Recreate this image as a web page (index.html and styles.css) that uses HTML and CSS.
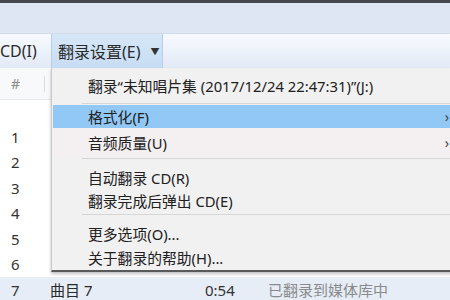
FILE: index.html
```html
<!DOCTYPE html>
<html>
<head>
<meta charset="utf-8">
<link rel="stylesheet" href="styles.css">
</head>
<body>
<div class="screen">
  <div class="topbar"></div>
  <div class="band"></div>
  <div class="toolbar">
    <div class="tb-item cut">CD(I)</div>
    <div class="tb-item active">翻录设置(E)<span class="caret">▼</span></div>
  </div>
  <div class="list">
    <div class="header"><span class="c-num">#</span><span class="hsep"></span></div>
    <div class="gap"></div>
    <div class="row"><span class="c-num">1</span><span class="mark"></span></div>
    <div class="row"><span class="c-num">2</span><span class="mark"></span></div>
    <div class="row"><span class="c-num">3</span><span class="mark"></span></div>
    <div class="row"><span class="c-num">4</span><span class="mark"></span></div>
    <div class="row"><span class="c-num">5</span><span class="mark"></span></div>
    <div class="row"><span class="c-num">6</span><span class="mark"></span></div>
    <div class="row sel"><span class="c-num">7</span><span class="c-title">曲目 7</span><span class="c-len">0:54</span><span class="c-status">已翻录到媒体库中</span></div>
  </div>
  <div class="menu">
    <div class="mi first">翻录“未知唱片集 (2017/12/24 22:47:31)”(J:)</div>
    <div class="msep s1"></div>
    <div class="mi hl">格式化(F)<span class="arrow">›</span></div>
    <div class="mi sub">音频质量(U)<span class="arrow">›</span></div>
    <div class="msep s2"></div>
    <div class="mi">自动翻录 CD(R)</div>
    <div class="mi">翻录完成后弹出 CD(E)</div>
    <div class="msep s3"></div>
    <div class="mi tall">更多选项(O)...</div>
    <div class="mi taller">关于翻录的帮助(H)...</div>
  </div>
</div>
</body>
</html>
```
FILE: styles.css
```css
html, body {
  margin: 0;
  padding: 0;
}
body {
  font-family: "Noto Sans", "Noto Sans CJK SC", sans-serif;
  color: #1f1f1f;
}
.screen {
  position: relative;
  width: 450px;
  height: 300px;
  overflow: hidden;
  background: #ffffff;
}
.topbar {
  height: 3px;
  background: #44474c;
}
.band {
  height: 30px;
  background: #dee6f4;
}
.toolbar {
  height: 35px;
  display: flex;
  align-items: stretch;
  background: linear-gradient(#f7faff 0%, #f3f7fd 20%, #e2eaf6 100%);
  border-top: 1px solid #d3dbe8;
  box-sizing: border-box;
}
.tb-item {
  display: flex;
  align-items: center;
  font-size: 16px;
  color: #2a2a2a;
}
.tb-item.cut {
  margin-left: 0;
  width: 51px;
}
.tb-item.active {
  width: 112px;
  box-sizing: border-box;
  padding-left: 6px;
  background: linear-gradient(#d6e7f8, #c7ddf4);
  border-left: 1px solid #b5cfea;
  border-right: 1px solid #b5cfea;
}
.caret {
  font-size: 9px;
  margin-left: 10px;
  color: #333;
}
.list {
  font-size: 15px;
}
.header {
  height: 32px;
  display: flex;
  align-items: center;
  background: #f8f9fb;
  border-bottom: 1px solid #e3e6ea;
  box-sizing: border-box;
  position: relative;
}
.hsep {
  position: absolute;
  left: 44px;
  top: 8px;
  width: 1px;
  height: 16px;
  background: #d8dbe0;
}
.gap {
  height: 24px;
}
.c-num {
  width: 50px;
  padding-left: 11px;
  box-sizing: border-box;
  color: #333;
}
.header .c-num {
  color: #888;
  font-size: 14px;
}
.row {
  height: 25.5px;
  display: flex;
  align-items: center;
  position: relative;
}
.mark {
  width: 2px;
  height: 11px;
  background: #b99a6a;
  margin-left: 1px;
}
.row.sel {
  background: #e6edf7;
}
.c-title {
  width: 155px;
  color: #2a2a2a;
}
.c-len {
  width: 63px;
  color: #333;
}
.c-status {
  color: #8a8a8a;
}
.menu {
  position: absolute;
  left: 51px;
  top: 68px;
  width: 412px;
  height: 204px;
  background: #f2f1f1;
  border-left: 1px solid #c9c9c9;
  border-bottom: 2px solid #5a5a5a;
  box-shadow: 0 2px 3px rgba(0,0,0,0.25);
  box-sizing: border-box;
  font-size: 14.8px;
  color: #202020;
}
.mi {
  height: 23px;
  display: flex;
  align-items: center;
  padding-left: 36px;
  position: relative;
  white-space: nowrap;
}
.mi.first {
  height: 34px;
}
.mi.hl {
  background: #91c8f5;
  margin-left: 1px;
  padding-left: 35px;
}
.mi.sub {
  height: 29px;
  background: #f4eff0;
}
.mi.tall {
  height: 24px;
}
.mi.taller {
  height: 25px;
}
.arrow {
  position: absolute;
  right: 14px;
  font-size: 14px;
  color: #444;
}
.msep {
  height: 1px;
  margin-left: 30px;
  background: #d6d6d6;
}
.msep.s1 {
  margin-top: 1px;
  margin-bottom: 1px;
}
.msep.s2 {
  margin-top: 1px;
  margin-bottom: 7px;
}
.msep.s3 {
  margin-top: 2px;
  margin-bottom: 6px;
}
```
